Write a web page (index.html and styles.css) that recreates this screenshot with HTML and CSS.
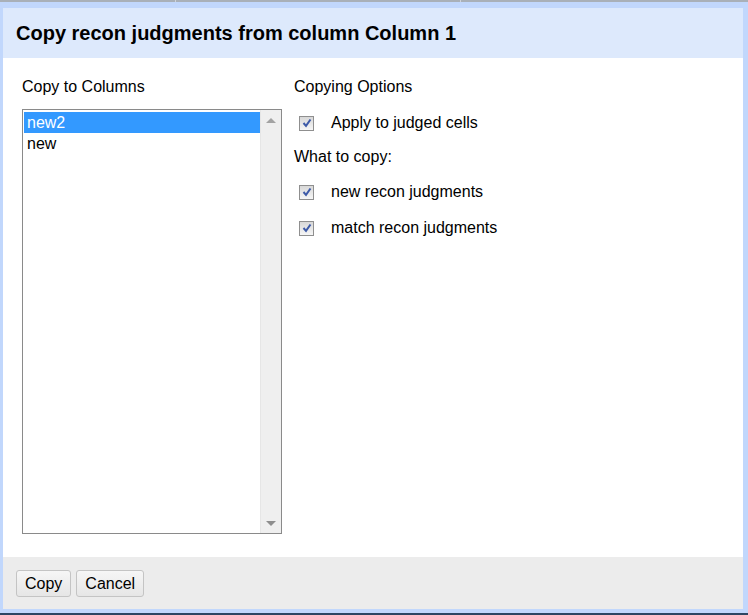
FILE: index.html
```html
<!DOCTYPE html>
<html lang="en">
<head>
    <meta charset="UTF-8">
    <meta name="viewport" content="width=device-width, initial-scale=1.0">
    <title>Copy recon judgments</title>
    <link rel="stylesheet" href="styles.css">
</head>
<body>
    <!-- header row of the data table behind the dialog -->
    <div class="page-strip">
        <span class="col-sep sep-1"></span>
        <span class="col-sep sep-2"></span>
    </div>

    <div class="dialog-frame">
        <div class="dialog-header">Copy recon judgments from column Column 1</div>

        <div class="dialog-body">
            <div class="col-left">
                <div class="label">Copy to Columns</div>
                <div class="listbox">
                    <div class="list-items">
                        <div class="list-item selected">new2</div>
                        <div class="list-item">new</div>
                    </div>
                    <div class="scrollbar">
                        <span class="arrow up"></span>
                        <span class="arrow down"></span>
                    </div>
                </div>
            </div>

            <div class="col-right">
                <div class="label">Copying Options</div>
                <label class="option first">
                    <span class="check"><svg width="10" height="10" viewBox="0 0 10 10"><path d="M1.5 5 L4 7.8 L8.5 1.5" fill="none" stroke="#3d5aa8" stroke-width="2"/></svg></span>
                    Apply to judged cells
                </label>
                <div class="label sub">What to copy:</div>
                <label class="option">
                    <span class="check"><svg width="10" height="10" viewBox="0 0 10 10"><path d="M1.5 5 L4 7.8 L8.5 1.5" fill="none" stroke="#3d5aa8" stroke-width="2"/></svg></span>
                    new recon judgments
                </label>
                <label class="option">
                    <span class="check"><svg width="10" height="10" viewBox="0 0 10 10"><path d="M1.5 5 L4 7.8 L8.5 1.5" fill="none" stroke="#3d5aa8" stroke-width="2"/></svg></span>
                    match recon judgments
                </label>
            </div>
        </div>

        <div class="dialog-footer">
            <button class="btn">Copy</button>
            <button class="btn">Cancel</button>
        </div>
    </div>
</body>
</html>
```

FILE: styles.css
```css
body {
    margin: 0;
    font-family: "Liberation Sans", Arial, sans-serif;
    background-color: #2c4562;
    height: 615px;
    overflow: hidden;
}
.page-strip {
    height: 2px;
    background-color: #a9b0b8;
    position: relative;
    overflow: hidden;
}
.col-sep {
    position: absolute;
    top: 0;
    width: 1px;
    height: 2px;
    background-color: #d0d4da;
}
.sep-1 { left: 175px; }
.sep-2 { left: 460px; }

.dialog-frame {
    background-color: #c1d7fc;
    padding: 6px 5px 4px 3px;
}
.dialog-header {
    height: 50px;
    line-height: 50px;
    padding-left: 13px;
    background-color: #dde9fc;
    font-size: 20px;
    font-weight: bold;
    color: #000;
}
.dialog-body {
    height: 499px;
    box-sizing: border-box;
    background: white;
    padding: 20px 19px 0;
    display: flex;
    gap: 12px;
    font-size: 16px;
    color: #000;
}
.col-left {
    width: 260px;
}
.label {
    line-height: 18px;
}
.listbox {
    margin-top: 13px;
    height: 425px;
    box-sizing: border-box;
    border: 1px solid #8a8a8a;
    display: flex;
}
.list-items {
    flex: 1;
    padding: 2px 0 0 1px;
}
.list-item {
    height: 21px;
    line-height: 21px;
    padding-left: 3px;
}
.list-item.selected {
    background-color: #3399ff;
    color: white;
}
.scrollbar {
    width: 20px;
    background-color: #efefef;
    border-left: 1px solid #e6e6e6;
    display: flex;
    flex-direction: column;
    justify-content: space-between;
    align-items: center;
    padding: 8px 0 7px;
}
.arrow {
    width: 0;
    height: 0;
    border-left: 5px solid transparent;
    border-right: 5px solid transparent;
}
.arrow.up {
    border-bottom: 5px solid #a3a3a3;
}
.arrow.down {
    border-top: 5px solid #8e8e8e;
}

.col-right {
    flex: 1;
}
.option {
    display: flex;
    align-items: center;
    height: 20px;
    margin-top: 16px;
    padding-left: 5px;
}
.option.first {
    margin-top: 17px;
}
.label.sub {
    margin-top: 15px;
}
.check {
    width: 15px;
    height: 15px;
    box-sizing: border-box;
    border: 1px solid #8f8f8f;
    background: linear-gradient(#d8d8d8, #f6f6f6);
    display: flex;
    align-items: center;
    justify-content: center;
    margin-right: 17px;
}

.dialog-footer {
    height: 52px;
    box-sizing: border-box;
    background-color: #ececec;
    padding: 13px 13px 0;
    display: flex;
    align-items: flex-start;
    gap: 5px;
}
.btn {
    height: 27px;
    padding: 0 8px;
    font-family: "Liberation Sans", Arial, sans-serif;
    font-size: 16px;
    color: #000;
    background: linear-gradient(#f6f6f6, #e6e6e6);
    border: 1px solid #c4c4c4;
    border-radius: 3px;
}
```
